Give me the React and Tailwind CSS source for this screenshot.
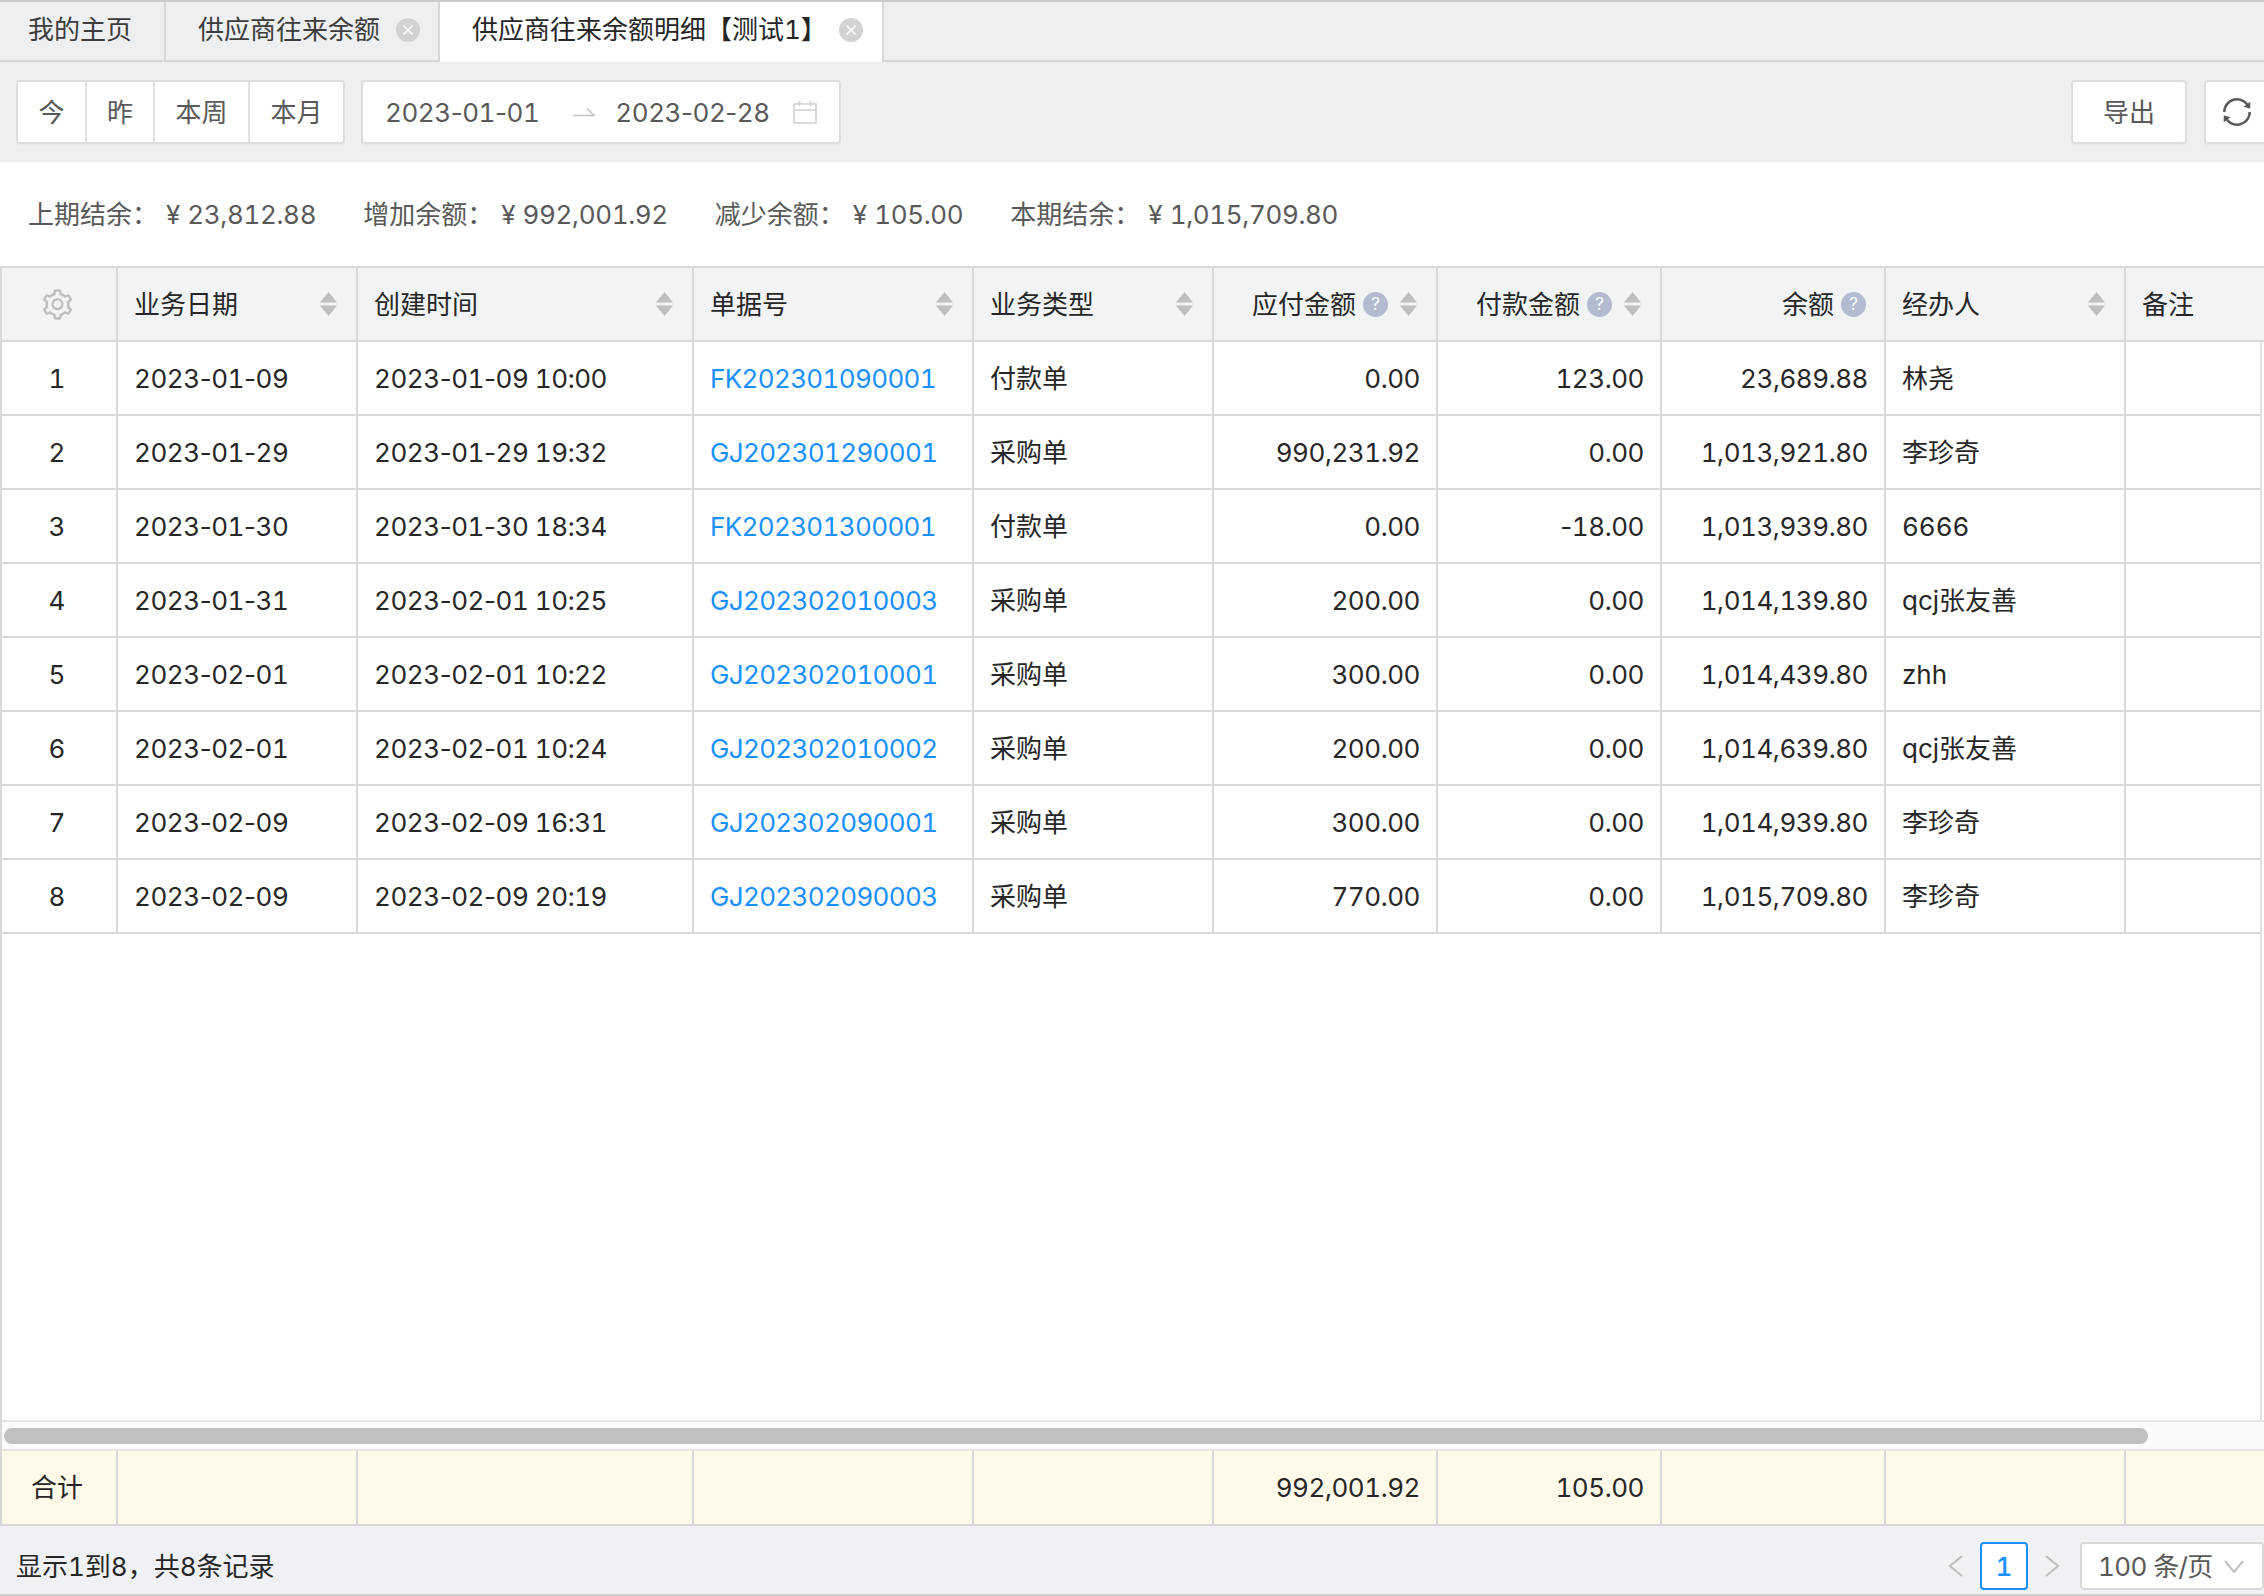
import { AiOutlineSetting, AiOutlineSync } from 'react-icons/ai'

const GRID = 'grid grid-cols-[116px_240px_336px_280px_240px_224px_224px_224px_240px_1fr]'

const COLUMNS = [
  { title: '业务日期', sort: true },
  { title: '创建时间', sort: true },
  { title: '单据号', sort: true },
  { title: '业务类型', sort: true },
  { title: '应付金额', sort: true, help: true, right: true },
  { title: '付款金额', sort: true, help: true, right: true },
  { title: '余额', help: true, right: true },
  { title: '经办人', sort: true },
]

const ROWS = [
  ['2023-01-09', '2023-01-09 10:00', 'FK202301090001', '付款单', '0.00', '123.00', '23,689.88', '林尧'],
  ['2023-01-29', '2023-01-29 19:32', 'GJ202301290001', '采购单', '990,231.92', '0.00', '1,013,921.80', '李珍奇'],
  ['2023-01-30', '2023-01-30 18:34', 'FK202301300001', '付款单', '0.00', '-18.00', '1,013,939.80', '6666'],
  ['2023-01-31', '2023-02-01 10:25', 'GJ202302010003', '采购单', '200.00', '0.00', '1,014,139.80', 'qcj张友善'],
  ['2023-02-01', '2023-02-01 10:22', 'GJ202302010001', '采购单', '300.00', '0.00', '1,014,439.80', 'zhh'],
  ['2023-02-01', '2023-02-01 10:24', 'GJ202302010002', '采购单', '200.00', '0.00', '1,014,639.80', 'qcj张友善'],
  ['2023-02-09', '2023-02-09 16:31', 'GJ202302090001', '采购单', '300.00', '0.00', '1,014,939.80', '李珍奇'],
  ['2023-02-09', '2023-02-09 20:19', 'GJ202302090003', '采购单', '770.00', '0.00', '1,015,709.80', '李珍奇'],
]

const SUMMARY = [
  ['上期结余：', '23,812.88'],
  ['增加余额：', '992,001.92'],
  ['减少余额：', '105.00'],
  ['本期结余：', '1,015,709.80'],
]

// tabular digits, but the hyphen keeps its narrow proportional width
function Num({ children, className = 'tracking-[-0.45px]' }) {
  const parts = children.split('-')
  return (
    <span className={`whitespace-pre ${className}`}>
      {parts.map((part, i) => (
        <span key={i}>
          {i > 0 && <span className="normal-nums">-</span>}
          {part}
        </span>
      ))}
    </span>
  )
}

function CloseDot() {
  return (
    <span className="flex h-6 w-6 shrink-0 items-center justify-center rounded-full bg-[#d2d2d2]">
      <svg width="12" height="12" viewBox="0 0 12 12" fill="none" stroke="#fff" strokeWidth="1.6">
        <path d="M1.5 1.5l9 9M10.5 1.5l-9 9" />
      </svg>
    </span>
  )
}

function SortIcon() {
  return (
    <svg className="shrink-0" width="17" height="24" viewBox="0 0 17 24" fill="#bfbfbf">
      <path d="M8.5 0L17 10.5H0z" />
      <path d="M0 13.5h17L8.5 24z" />
    </svg>
  )
}

function HelpDot() {
  return (
    <span className="flex h-[25px] w-[25px] shrink-0 items-center justify-center rounded-full bg-[#b2bbcf] text-[17px] leading-none text-white">
      ?
    </span>
  )
}

function HeaderCell({ title, sort, help, right }) {
  return (
    <div className={`flex items-center border-r-2 border-[#d9d9d9] pl-[16px] ${sort ? 'pr-[19px]' : 'pr-[18px]'}`}>
      <span className={right ? 'ml-auto' : ''}>{title}</span>
      {help && <span className="ml-[7px]"><HelpDot /></span>}
      {sort && <span className={right ? 'ml-[12px]' : 'ml-auto'}><SortIcon /></span>}
    </div>
  )
}

function Cell({ children, className = '' }) {
  return (
    <div className={`flex items-center border-r-2 border-[#d9d9d9] px-[16px] ${className}`}>
      {children}
    </div>
  )
}

export default function App() {
  return (
    <div className="flex h-[1596px] w-[2264px] flex-col overflow-hidden bg-white font-[Inter,'Noto_Sans_CJK_SC',sans-serif] text-[26px] tabular-nums text-[#262626]">
      {/* tabs */}
      <div className="flex h-[62px] shrink-0 border-y-2 border-t-[#cbccce] border-b-[#d6d7d9] bg-[#eeeff1] text-[#3c3c3c]">
        <div className="flex w-[166px] items-center border-r-2 border-[#d6d7d9] pb-[3px] pl-[28px]">我的主页</div>
        <div className="flex w-[274px] items-center border-r-2 border-[#d6d7d9] pb-[3px] pl-[32px]">
          供应商往来余额
          <span className="ml-[16px]"><CloseDot /></span>
        </div>
        <div className="-mb-[2px] flex w-[444px] items-center border-r-2 border-[#d6d7d9] bg-white pb-[5px] pl-[32px] text-[#262626]">
          供应商往来余额明细【测试1】
          <span className="ml-auto mr-[19px]"><CloseDot /></span>
        </div>
      </div>

      {/* toolbar */}
      <div className="flex h-[100px] shrink-0 items-center bg-[#eeeff1] pl-[16px] text-[#595959]">
        <div className="flex h-[64px] w-[329px] rounded-[4px] border-2 border-[#dcdddf] bg-white shadow-[0_2px_0_rgba(0,0,0,0.02)]">
          <div className="flex w-[69px] items-center justify-center border-r-2 border-[#e2e2e2]">今</div>
          <div className="flex w-[68px] items-center justify-center border-r-2 border-[#e2e2e2]">昨</div>
          <div className="flex w-[95px] items-center justify-center border-r-2 border-[#e2e2e2]">本周</div>
          <div className="flex flex-1 items-center justify-center">本月</div>
        </div>
        <div className="ml-[16px] flex h-[64px] w-[480px] items-center rounded-[4px] border-2 border-[#dcdddf] bg-white pl-[22px] shadow-[0_2px_0_rgba(0,0,0,0.02)]">
          <Num>2023-01-01</Num>
          <svg className="ml-[34px] shrink-0" width="22" height="10" viewBox="0 0 22 10" fill="none" stroke="#c4c4c4" strokeWidth="1.6">
            <path d="M0 8.5h21L14 1.5" />
          </svg>
          <span className="ml-[20px]"><Num>2023-02-28</Num></span>
          <svg className="ml-[23px] shrink-0" width="24" height="24" viewBox="0 0 24 24" fill="none" stroke="#d0d0d0" strokeWidth="1.6">
            <path d="M1 4h22v19H1zM1 10h22M6.5 1v5M17.5 1v5" />
          </svg>
        </div>
        <div className="ml-auto flex h-[64px] w-[116px] items-center justify-center rounded-[4px] border-2 border-[#dcdddf] bg-white shadow-[0_2px_0_rgba(0,0,0,0.02)]">导出</div>
        <div className="-mr-[20px] ml-[17px] flex h-[64px] w-[80px] items-center rounded-[4px] border-2 border-[#dcdddf] bg-white pl-[14px] shadow-[0_2px_0_rgba(0,0,0,0.02)]">
          <AiOutlineSync size={34} />
        </div>
      </div>

      {/* summary */}
      <div className="flex h-[104px] shrink-0 items-center gap-[47px] pl-[28px] text-[#595959]">
        {SUMMARY.map(([label, value]) => (
          <span key={label} className="flex">
            {label}
            <span className="ml-[8px] mr-[7px]">¥</span>
            <Num className="tracking-[-0.35px]">{value}</Num>
          </span>
        ))}
      </div>

      {/* table */}
      <div className="flex min-h-0 flex-1 flex-col border-l-2 border-[#d9d9d9]">
        <div className={`${GRID} h-[76px] shrink-0 border-y-2 border-[#d9d9d9] bg-[#f2f3f5]`}>
          <div className="flex items-center justify-center border-r-2 border-[#d9d9d9] pr-[4px] text-[#bfbfbf]">
            <AiOutlineSetting size={35} />
          </div>
          {COLUMNS.map((col) => (
            <HeaderCell key={col.title} {...col} />
          ))}
          <div className="flex items-center pl-[16px]">备注</div>
        </div>

        <div className="flex min-h-0 w-[2260px] flex-1 flex-col border-r-2 border-[#e3e3e3]">
          {ROWS.map((row, i) => (
            <div key={row[2]} className={`${GRID} h-[74px] shrink-0 border-b-2 border-[#d9d9d9]`}>
              <Cell className="justify-center !pl-0 !pr-[4px]">{i + 1}</Cell>
              <Cell><Num>{row[0]}</Num></Cell>
              <Cell><Num>{row[1]}</Num></Cell>
              <Cell className="text-[#1890ff]"><Num className="tracking-[-0.65px]">{row[2]}</Num></Cell>
              <Cell>{row[3]}</Cell>
              <Cell className="justify-end"><Num>{row[4]}</Num></Cell>
              <Cell className="justify-end"><Num>{row[5]}</Num></Cell>
              <Cell className="justify-end"><Num>{row[6]}</Num></Cell>
              <Cell>{row[7]}</Cell>
              <div />
            </div>
          ))}
        </div>

        {/* scrollbar */}
        <div className="h-[31px] shrink-0 border-y-2 border-[#e6e6e6] bg-[#fafafa] px-[2px] pt-[6px]">
          <div className="h-[16px] w-[2144px] rounded-full bg-[#c1c1c1]" />
        </div>

        {/* totals */}
        <div className={`${GRID} h-[75px] shrink-0 border-b-2 border-[#d9d9d9] bg-[#fef9e9]`}>
          <Cell className="justify-center !pl-0 !pr-[4px]">合计</Cell>
          <Cell />
          <Cell />
          <Cell />
          <Cell />
          <Cell className="justify-end"><Num>992,001.92</Num></Cell>
          <Cell className="justify-end"><Num>105.00</Num></Cell>
          <Cell />
          <Cell />
          <div />
        </div>
      </div>

      {/* footer */}
      <div className="flex h-[70px] shrink-0 items-center border-b-2 border-[#cfcfcf] bg-[#f0f1f5] pl-[16px] pt-[12px]">
        <span>显示1到8，共8条记录</span>
        <svg className="ml-auto" width="15" height="22" viewBox="0 0 15 22" fill="none" stroke="#bfbfbf" strokeWidth="2">
          <path d="M14 1L2 11l12 10" />
        </svg>
        <div className="ml-[17px] flex h-[48px] w-[48px] items-center justify-center rounded-[4px] border-2 border-[#1890ff] bg-white font-medium text-[#1890ff]">1</div>
        <svg className="ml-[17px]" width="15" height="22" viewBox="0 0 15 22" fill="none" stroke="#bfbfbf" strokeWidth="2">
          <path d="M1 1l12 10L1 21" />
        </svg>
        <div className="ml-[20px] flex h-[48px] w-[184px] items-center rounded-[4px] border-2 border-[#d9d9d9] bg-white pl-[16px] text-[#595959]">
          <span className="tracking-[-0.6px]">100 条/页</span>
          <svg className="ml-auto mr-[18px]" width="20" height="13" viewBox="0 0 20 13" fill="none" stroke="#bfbfbf" strokeWidth="2">
            <path d="M1 1l9 11 9-11" />
          </svg>
        </div>
      </div>
    </div>
  )
}
